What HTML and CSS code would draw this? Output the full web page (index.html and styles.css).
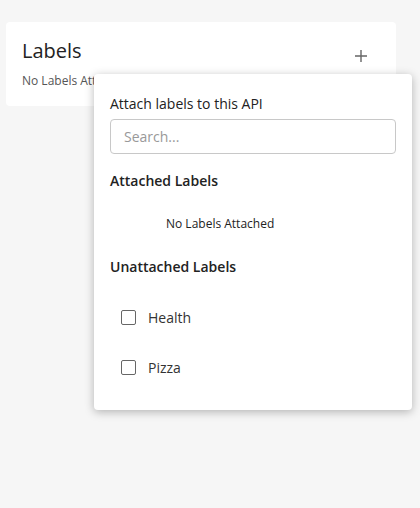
FILE: index.html
```html
<!DOCTYPE html>
<html>
<head>
<meta charset="utf-8">
<link rel="stylesheet" href="styles.css">
</head>
<body>
<div class="card">
  <div class="card-head">
    <h2 class="card-title">Labels</h2>
    <svg class="plus" width="12" height="12" viewBox="0 0 12 12"><path d="M6 0V12M0 6H12" stroke="#666" stroke-width="1.4" fill="none"/></svg>
  </div>
  <div class="card-empty">No Labels Attached</div>
</div>

<div class="popover">
  <div class="pop-title">Attach labels to this API</div>
  <input class="search" type="text" placeholder="Search...">
  <div class="section">Attached Labels</div>
  <div class="empty">No Labels Attached</div>
  <div class="section section-un">Unattached Labels</div>
  <div class="list">
    <label class="row"><span class="box"></span><span>Health</span></label>
    <label class="row"><span class="box"></span><span>Pizza</span></label>
  </div>
</div>
</body>
</html>
```

FILE: styles.css
```css
* { box-sizing: border-box; }
html, body { margin: 0; padding: 0; }
body {
  background: #f6f6f6;
  font-family: "Open Sans", "Noto Sans", sans-serif;
  color: #333;
  width: 420px;
  height: 508px;
  position: relative;
  overflow: hidden;
}
.card {
  margin: 22px 0 0 6px;
  width: 390px;
  height: 84px;
  background: #fff;
  border-radius: 4px;
  padding: 15px 16px 0 16px;
}
.card-head {
  display: flex;
  justify-content: space-between;
  align-items: flex-start;
}
.card-title {
  margin: 0;
  font-size: 20px;
  font-weight: 400;
  line-height: 28px;
  color: #222;
}
.plus { margin: 13px 13px 0 0; }
.card-empty {
  margin-top: 8px;
  font-size: 12px;
  line-height: 16px;
  color: #555;
}
.popover {
  position: absolute;
  left: 94px;
  top: 74px;
  width: 318px;
  height: 336px;
  background: #fff;
  border-radius: 4px;
  box-shadow: 0 2px 10px rgba(0,0,0,0.28);
  padding: 20px 16px 0 16px;
  display: flex;
  flex-direction: column;
}
.pop-title {
  font-size: 14px;
  line-height: 20px;
  color: #222;
}
.search {
  margin-top: 5px;
  height: 35px;
  width: 100%;
  border: 1px solid #c8c8c8;
  border-radius: 4px;
  padding: 0 13px;
  font-family: inherit;
  font-size: 14px;
  color: #333;
  outline: none;
}
.search::placeholder { color: #999; }
.section {
  margin-top: 17px;
  font-size: 14px;
  font-weight: 600;
  line-height: 20px;
  color: #222;
}
.empty {
  margin-top: 25px;
  padding-left: 56px;
  font-size: 12px;
  line-height: 16px;
  color: #222;
}
.section-un { margin-top: 25px; }
.list {
  margin-top: 15px;
  display: flex;
  flex-direction: column;
}
.row {
  height: 50px;
  display: flex;
  align-items: center;
  gap: 12px;
  padding-left: 11px;
  font-size: 14px;
  color: #333;
}
.box {
  width: 15px;
  height: 15px;
  border: 1.5px solid #666;
  border-radius: 2px;
}
```
